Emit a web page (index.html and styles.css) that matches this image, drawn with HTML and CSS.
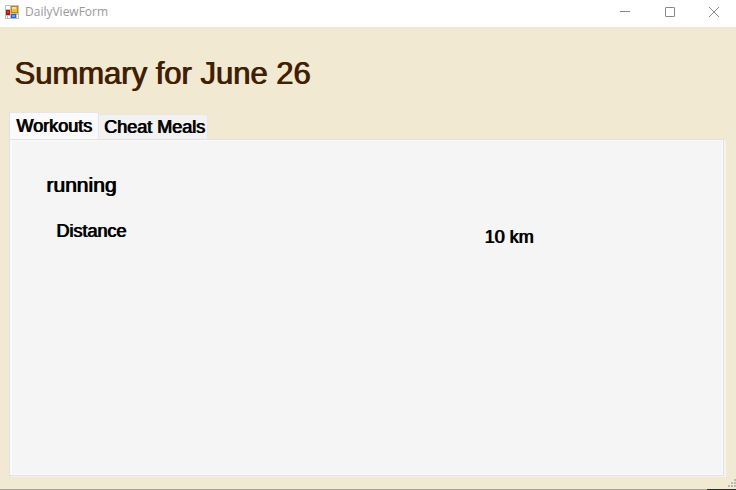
FILE: index.html
```
<!DOCTYPE html>
<html lang="en">
<head>
<meta charset="utf-8">
<title>DailyViewForm</title>
<link rel="stylesheet" href="styles.css">
</head>
<body>
<header class="titlebar">
  <svg class="app-icon" viewBox="0 0 14 14" shape-rendering="crispEdges" aria-hidden="true">
    <path fill="#bdbdbd" d="M0 0h14v14H0z"/>
    <path fill="#fff" d="M1 1h4v3H1zM1 11h1v2H1zM3 11h2v2H3zM12 10h1v3h-1z"/>
    <path fill="#b58a18" d="M6 1h7v7H6z"/>
    <path fill="#f3bd2b" d="M7 2h5v5H7z"/>
    <path fill="#ffe28a" d="M7 2h4v2H7z"/>
    <path fill="#a01810" d="M1 5h4v5H1z"/>
    <path fill="#d8402c" d="M2 6h2v2H2z"/>
    <path fill="#2b62bd" d="M6 9h5v4H6z"/>
    <path fill="#69a0ee" d="M7 10h3v2H7z"/>
  </svg>
  <span class="window-title">DailyViewForm</span>
  <div class="window-controls">
    <button type="button" aria-label="Minimize"><svg viewBox="0 0 10 10"><path d="M0 4.5h10"/></svg></button>
    <button type="button" aria-label="Maximize"><svg viewBox="0 0 10 10"><rect x=".5" y=".5" width="9" height="9" rx=".5"/></svg></button>
    <button type="button" aria-label="Close"><svg viewBox="0 0 10 10"><path d="M0 0l10 10M10 0L0 10"/></svg></button>
  </div>
</header>
<main class="form">
  <h1>Summary for June 26</h1>
  <div class="tabs" role="tablist">
    <button type="button" class="tab selected" role="tab" id="tab-workouts" aria-selected="true" aria-controls="workouts">Workouts</button>
    <button type="button" class="tab" role="tab" aria-selected="false">Cheat Meals</button>
  </div>
  <section class="panel" role="tabpanel" id="workouts" aria-labelledby="tab-workouts">
    <div class="page">
      <h2>running</h2>
      <dl class="stats">
        <dt>Distance</dt>
        <dd>10 km</dd>
      </dl>
    </div>
  </section>
</main>
<svg class="grip" viewBox="0 0 8 8" shape-rendering="crispEdges" aria-hidden="true"><path fill="#b9b8b5" d="M6 0h2v2H6zM3 3h2v2H3zM6 3h2v2H6zM0 6h2v2H0zM3 6h2v2H3zM6 6h2v2H6z"/></svg>
</body>
</html>
```
FILE: styles.css
```
* {
  box-sizing: border-box;
}

body {
  position: relative;
  display: flex;
  flex-direction: column;
  min-height: 100vh;
  margin: 0;
  background: #f2e9d2;
  border-bottom: 1px solid #aaa59a;
  border-image: linear-gradient(to right, #aaa59a 96%, #252b30 96%) 1;
  color: #000;
  font-family: "Liberation Sans", Arial, sans-serif;
}

.titlebar {
  display: flex;
  align-items: center;
  height: 27px;
  padding: 0 0 4px 5px;
  background: #fff;
}

.app-icon {
  width: 14px;
  height: 14px;
}

.window-title {
  margin-left: 6px;
  color: #999;
  font: 12px/16px "Open Sans", sans-serif;
}

.window-controls {
  display: flex;
  margin-left: auto;
}

.window-controls button {
  display: flex;
  align-items: center;
  justify-content: center;
  width: 45px;
  height: 22px;
  padding: 0;
  border: 0;
  background: none;
}

.window-controls button:last-child {
  width: 44px;
}

.window-controls svg {
  width: 10px;
  height: 10px;
  fill: none;
  stroke: #888;
  overflow: visible;
}

.form {
  display: flex;
  flex: 1;
  flex-direction: column;
  padding: 29px 12px 13px 9px;
}

/* A one-pixel shadow gives the regular face a medium weight. */
h1,
h2,
.tab,
.stats {
  font-weight: 400;
  text-shadow: 1px 0 currentColor;
}

h1 {
  margin: 0 0 20px 5px;
  color: #402000;
  font-size: 31px;
  line-height: 36px;
}

.tabs {
  display: flex;
  align-items: flex-end;
}

.tab {
  height: 25px;
  padding: 0 2px 0 5px;
  border: 1px solid #e6e6e6;
  border-left: 0;
  border-bottom: 0;
  background: #f2f2f2;
  color: #000;
  font-family: inherit;
  font-size: 18px;
  line-height: 24px;
}

.tab.selected {
  height: 27px;
  padding: 0 6px;
  border-left: 1px solid #e0e1e6;
  background: #fafafa;
}

.panel {
  display: flex;
  flex: 1;
  padding: 1px 1px 1px 2px;
  border: 1px solid #dfe1e5;
  background: #fafafa;
  box-shadow: 2px 1px 0 #f5f3ef;
}

.page {
  flex: 1;
  padding: 32px 34px;
  background: #f5f5f5;
}

h2 {
  margin: 0;
  font-size: 21px;
  line-height: 24px;
}

.stats {
  display: grid;
  grid-template-columns: 21fr 10fr;
  align-items: start;
  margin: 23px 0 0 10px;
  font-size: 18px;
  line-height: 22px;
}

.stats dd {
  margin: 6px 0 0;
}

.grip {
  position: absolute;
  right: 0;
  bottom: 2px;
  width: 8px;
  height: 8px;
}
```
